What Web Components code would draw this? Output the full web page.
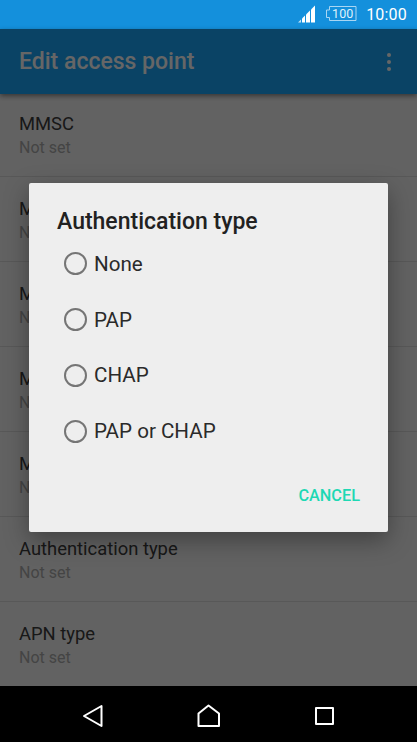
<!DOCTYPE html>
<html>
<head>
<meta charset="utf-8">
<title>Edit access point</title>
<style>
html, body { margin: 0; height: 100%; }
body { font-family: Roboto, "Liberation Sans", sans-serif; background: #f5f5f5; overflow: hidden; }
</style>
</head>
<body>
<phone-screen>
  <status-bar slot="status"></status-bar>
  <app-toolbar slot="toolbar">Edit access point</app-toolbar>
  <apn-row title="MMSC">Not set</apn-row>
  <apn-row title="MMS proxy">Not set</apn-row>
  <apn-row title="MMS port">Not set</apn-row>
  <apn-row title="MCC">Not set</apn-row>
  <apn-row title="MNC">Not set</apn-row>
  <apn-row title="Authentication type">Not set</apn-row>
  <apn-row title="APN type">Not set</apn-row>
  <choice-dialog slot="dialog" heading="Authentication type" action="CANCEL">
    <radio-option>None</radio-option>
    <radio-option>PAP</radio-option>
    <radio-option>CHAP</radio-option>
    <radio-option>PAP or CHAP</radio-option>
  </choice-dialog>
  <nav-bar slot="nav"></nav-bar>
</phone-screen>

<script>
// every element sets its shadow root in the constructor
class PhoneScreen extends HTMLElement {
  constructor() {
    super();
    this.attachShadow({ mode: 'open' }).innerHTML = `
<style>
:host { display: flex; flex-direction: column; height: 742px; width: 417px; position: relative; overflow: hidden; }
.content { flex: 1; position: relative; display: flex; flex-direction: column; min-height: 0; }
.list { flex: 1; min-height: 0; overflow: hidden; }
.list-in { margin-top: -2px; }
.scrim { position: absolute; inset: 0; background: rgba(0,0,0,.6); display: flex; justify-content: center; align-items: flex-start; }
</style>
<slot name="status"></slot>
<div class="content">
  <slot name="toolbar"></slot>
  <div class="list"><div class="list-in"><slot></slot></div></div>
  <div class="scrim"><slot name="dialog"></slot></div>
</div>
<slot name="nav"></slot>`;
  }
}

class StatusBar extends HTMLElement {
  constructor() {
    super();
    this.attachShadow({ mode: 'open' }).innerHTML = `
<style>
:host { display: flex; align-items: center; justify-content: flex-end; height: 29px; background: #1490dc; color: #fff; padding-right: 10px; }
svg { display: block; }
.signal { margin-right: 9px; margin-top: -2px; }
.batt { position: relative; width: 32px; height: 16px; margin-right: 9px; margin-top: -1px; }
.batt span { position: absolute; inset: 0 0 0 3px; text-align: center; font-size: 12.500px; line-height: 16px; color: #dff0fb; }
.time { font-size: 16px; font-weight: 400; letter-spacing: .2px; }
</style>
<svg class="signal" width="18" height="18" viewBox="0 0 18 18" fill="#fff">
  <path d="M0 17.500 3 14.500V17.500Z" opacity=".75"/>
  <path d="M4 13.500 7 10.500V17.500H4Z"/>
  <path d="M8 9.500 12 5.500V17.500H8Z"/>
  <path d="M13 4.500 17 .5V17.500H13Z"/>
</svg>
<div class="batt">
  <svg width="32" height="16" viewBox="0 0 32 16" fill="none" stroke="#a9d6f3" stroke-width="1">
    <path d="M4.500 .5H31V14.500H4.500V11.500H1.500V4H4.500Z"/>
  </svg>
  <span>100</span>
</div>
<div class="time">10:00</div>`;
  }
}

class AppToolbar extends HTMLElement {
  constructor() {
    super();
    this.attachShadow({ mode: 'open' }).innerHTML = `
<style>
:host { display: flex; align-items: center; justify-content: space-between; height: 65px; flex: none; box-sizing: border-box; padding: 0 26px 0 19px; background: #19a8fc; color: #fff; font-size: 23px; font-weight: 500; box-shadow: 0 2px 5px rgba(0,0,0,.45); position: relative; }
.dots { display: flex; flex-direction: column; gap: 3px; }
.dots i { width: 4px; height: 4px; border-radius: 50%; background: #fff; }
</style>
<slot></slot>
<div class="dots"><i></i><i></i><i></i></div>`;
  }
}

class ApnRow extends HTMLElement {
  constructor() {
    super();
    this.attachShadow({ mode: 'open' }).innerHTML = `
<style>
:host { display: block; box-sizing: border-box; height: 85px; padding: 21px 19px 0; border-bottom: 1px solid #dcdcdc; }
.t { font-size: 18.400px; line-height: 22px; color: #3c3c3c; }
.s { font-size: 16px; line-height: 20px; margin-top: 3px; color: #aaa; }
</style>
<div class="t"></div>
<div class="s"><slot></slot></div>`;
    this.shadowRoot.querySelector('.t').textContent = this.getAttribute('title');
  }
}

class ChoiceDialog extends HTMLElement {
  constructor() {
    super();
    this.attachShadow({ mode: 'open' }).innerHTML = `
<style>
:host { display: block; box-sizing: border-box; width: 359px; height: 349px; margin-top: 154px; padding: 26px 28px 0; background: #eee; border-radius: 2px; box-shadow: 0 8px 24px rgba(0,0,0,.35); }
h2 { margin: 0; font-size: 23px; line-height: 26px; font-weight: 500; color: #212121; }
.opts { margin: 1px 0 0 7px; }
.act { margin-top: 27px; display: flex; justify-content: flex-end; font-size: 16.300px; font-weight: 500; color: #1ed8b4; line-height: 20px; }
</style>
<h2></h2>
<div class="opts"><slot></slot></div>
<div class="act"></div>`;
    this.shadowRoot.querySelector('h2').textContent = this.getAttribute('heading');
    this.shadowRoot.querySelector('.act').textContent = this.getAttribute('action');
  }
}

class RadioOption extends HTMLElement {
  constructor() {
    super();
    this.attachShadow({ mode: 'open' }).innerHTML = `
<style>
:host { display: flex; align-items: center; height: 55.750px; gap: 7px; font-size: 20.600px; color: #2a2a2a; }
.r { box-sizing: border-box; width: 23px; height: 23px; border: 2px solid #757575; border-radius: 50%; flex: none; }
</style>
<div class="r"></div>
<slot></slot>`;
  }
}

class NavBar extends HTMLElement {
  constructor() {
    super();
    this.attachShadow({ mode: 'open' }).innerHTML = `
<style>
:host { display: block; height: 56px; background: #000; flex: none; position: relative; }
svg { position: absolute; left: 0; top: 0; }
</style>
<svg width="417" height="56" viewBox="0 0 417 56" fill="none" stroke="#fff" stroke-width="2" stroke-linejoin="round">
  <path d="M84 30 101.500 20V40Z"/>
  <path d="M198.500 40V27.500L208.500 19.500 219 27.500V40Z"/>
  <path d="M316 22H333V38H316Z"/>
</svg>`;
  }
}

customElements.define('phone-screen', PhoneScreen);
customElements.define('status-bar', StatusBar);
customElements.define('app-toolbar', AppToolbar);
customElements.define('apn-row', ApnRow);
customElements.define('choice-dialog', ChoiceDialog);
customElements.define('radio-option', RadioOption);
customElements.define('nav-bar', NavBar);
</script>
</body>
</html>
